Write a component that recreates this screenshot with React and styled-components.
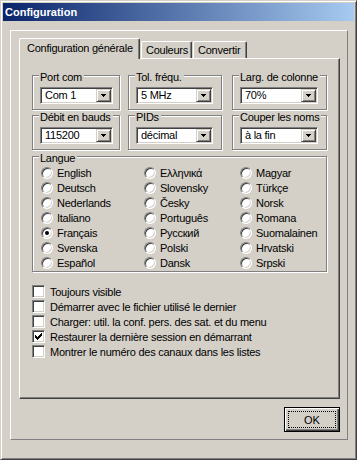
import React from 'react';
import styled, { createGlobalStyle } from 'styled-components';

const Global = createGlobalStyle`
  html, body { margin: 0; padding: 0; background: #D4D0C8; }
  * { box-sizing: border-box; }
`;

const Window = styled.div`
  width: 357px;
  height: 460px;
  background: #D4D0C8;
  border: 1px solid;
  border-color: #D4D0C8 #404040 #404040 #D4D0C8;
  box-shadow: inset 1px 1px 0 #fff, inset -1px -1px 0 #808080;
  padding: 2px;
  display: flex;
  flex-direction: column;
  font-family: "Liberation Sans", Arial, sans-serif;
  font-size: 11px;
  letter-spacing: -0.25px;
  color: #000;
`;

const TitleBar = styled.div`
  flex: none;
  height: 18px;
  background: linear-gradient(to right, #0A246A, #A6CAF0);
  color: #fff;
  font-weight: bold;
  font-size: 11px;
  letter-spacing: 0;
  display: flex;
  align-items: center;
  padding-left: 2px;
`;

const Body = styled.div`
  padding: 9px 6px 0 7px;
`;

const Frame = styled.div`
  width: 338px;
  height: 410px;
  border: 1px solid;
  border-color: #fff #808080 #808080 #fff;
  padding: 7px 7px 0 8px;
  display: flex;
  flex-direction: column;
`;

const TabStrip = styled.div`
  height: 20px;
  display: flex;
  align-items: flex-end;
  gap: 1px;
`;

const Tab = styled.div`
  position: relative;
  z-index: ${p => (p.$active ? 2 : 1)};
  width: ${p => p.$w}px;
  height: ${p => (p.$active ? 21 : 17)}px;
  margin-bottom: ${p => (p.$active ? -1 : 0)}px;
  background: #D4D0C8;
  border-left: 1px solid #fff;
  border-top: 1px solid #fff;
  border-right: 1px solid #404040;
  box-shadow: inset -1px 0 0 #808080;
  border-radius: 2px 2px 0 0;
  padding-left: ${p => p.$pl}px;
  padding-bottom: ${p => (p.$active ? 2 : 0)}px;
  display: flex;
  align-items: center;
  white-space: nowrap;
`;

const Panel = styled.div`
  width: 321px;
  height: 341px;
  border: 1px solid;
  border-color: #fff #404040 #404040 #fff;
  box-shadow: inset -1px -1px 0 #808080;
  padding: 16px 0 0 12px;
  display: flex;
  flex-direction: column;
`;

const GroupRow = styled.div`
  display: grid;
  grid-template-columns: 96px 104px 96px;
  margin-top: ${p => p.$mt || 0}px;
`;

const Group = styled.div`
  position: relative;
  width: ${p => p.$w - 1}px;
  height: ${p => p.$h - 1}px;
  border: 1px solid #808080;
  box-shadow: inset 1px 1px 0 #fff, 1px 1px 0 #fff;
  padding: ${p => p.$pad || '11px 0 0 7px'};
  margin-top: ${p => p.$mt || 0}px;
`;

const Legend = styled.span`
  position: absolute;
  top: -5px;
  left: 6px;
  line-height: 13px;
  padding: 0 2px 0 1px;
  background: #D4D0C8;
  white-space: nowrap;
`;

const Combo = styled.div`
  width: ${p => p.$w}px;
  height: 17px;
  background: #fff;
  border: 1px solid;
  border-color: #808080 #fff #fff #808080;
  box-shadow: inset 1px 1px 0 #404040, inset -1px -1px 0 #D4D0C8;
  padding: 1px;
  display: flex;
  align-items: center;
`;

const ComboText = styled.span`
  flex: 1;
  padding-left: 3px;
  line-height: 13px;
  white-space: nowrap;
`;

const DropBtn = styled.div`
  flex: none;
  width: 15px;
  height: 13px;
  background: #D4D0C8;
  border: 1px solid;
  border-color: #D4D0C8 #404040 #404040 #D4D0C8;
  box-shadow: inset 1px 1px 0 #fff, inset -1px -1px 0 #808080;
  display: flex;
  align-items: center;
  justify-content: center;
`;

const RadioGrid = styled.div`
  display: grid;
  grid-template-columns: 103px 96px 1fr;
  grid-template-rows: repeat(7, 15px);
  grid-auto-flow: column;
`;

const Choice = styled.label`
  display: flex;
  align-items: center;
  gap: ${p => p.$gap}px;
  height: ${p => p.$h}px;
  white-space: nowrap;
`;

const RadioDot = styled.span`
  position: relative;
  flex: none;
  width: 12px;
  height: 12px;
  border-radius: 50%;
  background: #fff;
  border: 1px solid;
  border-color: #808080 #fff #fff #808080;
  box-shadow: inset 1px 1px 0 #404040, inset -1px -1px 0 #D4D0C8;
  &::after {
    content: '';
    display: ${p => (p.$on ? 'block' : 'none')};
    position: absolute;
    left: 3px;
    top: 3px;
    width: 4px;
    height: 4px;
    border-radius: 50%;
    background: #000;
  }
`;

const CheckList = styled.div`
  margin-top: 12px;
  display: flex;
  flex-direction: column;
`;

const CheckBox = styled.span`
  flex: none;
  width: 13px;
  height: 13px;
  background: #fff;
  border: 1px solid;
  border-color: #808080 #fff #fff #808080;
  box-shadow: inset 1px 1px 0 #404040, inset -1px -1px 0 #D4D0C8;
  padding: 2px;
  display: flex;
`;

const ButtonRow = styled.div`
  margin-top: 8px;
  display: flex;
  justify-content: flex-end;
`;

const Button = styled.button`
  position: relative;
  width: 56px;
  height: 25px;
  padding: 0;
  border: 1px solid #000;
  background: #D4D0C8;
  box-shadow: inset 1px 1px 0 #fff, inset -1px -1px 0 #404040, inset -2px -2px 0 #808080;
  font-family: "Liberation Sans", Arial, sans-serif;
  font-size: 11px;
  color: #000;
  display: flex;
  align-items: center;
  justify-content: center;
  &::after {
    content: '';
    position: absolute;
    inset: 3px;
    border: 1px dotted #000;
  }
`;

const Arrow = () => (
  <svg width="5" height="3" viewBox="0 0 5 3" shapeRendering="crispEdges">
    <rect x="0" y="0" width="5" height="1" fill="#000" />
    <rect x="1" y="1" width="3" height="1" fill="#000" />
    <rect x="2" y="2" width="1" height="1" fill="#000" />
  </svg>
);

const Check = () => (
  <svg width="7" height="7" viewBox="0 0 7 7" shapeRendering="crispEdges">
    {[2, 3, 4, 3, 2, 1, 0].map((y, x) => (
      <rect key={x} x={x} y={y} width="1" height="3" fill="#000" />
    ))}
  </svg>
);

const ComboBox = ({ w, value }) => (
  <Combo $w={w}>
    <ComboText>{value}</ComboText>
    <DropBtn>
      <Arrow />
    </DropBtn>
  </Combo>
);

const languages = [
  'English', 'Deutsch', 'Nederlands', 'Italiano', 'Français', 'Svenska', 'Español',
  'Ελληνικά', 'Slovensky', 'Česky', 'Português', 'Русский', 'Polski', 'Dansk',
  'Magyar', 'Türkçe', 'Norsk', 'Romana', 'Suomalainen', 'Hrvatski', 'Srpski',
];

const options = [
  ['Toujours visible', false],
  ['Démarrer avec le fichier utilisé le dernier', false],
  ['Charger: util. la conf. pers. des sat. et du menu', false],
  ['Restaurer la dernière session en démarrant', true],
  ['Montrer le numéro des canaux dans les listes', false],
];

export default function App() {
  return (
    <>
      <Global />
      <Window>
        <TitleBar>Configuration</TitleBar>
        <Body>
          <Frame>
            <TabStrip>
              <Tab $active $w={121} $pl={7}>Configuration générale</Tab>
              <Tab $w={51} $pl={4}>Couleurs</Tab>
              <Tab $w={54} $pl={4}>Convertir</Tab>
            </TabStrip>
            <Panel>
              <GroupRow>
                <Group $w={89} $h={36}>
                  <Legend>Port com</Legend>
                  <ComboBox w={73} value="Com 1" />
                </Group>
                <Group $w={95} $h={36}>
                  <Legend>Tol. fréqu.</Legend>
                  <ComboBox w={77} value="5 MHz" />
                </Group>
                <Group $w={96} $h={36}>
                  <Legend>Larg. de colonne</Legend>
                  <ComboBox w={78} value="70%" />
                </Group>
              </GroupRow>
              <GroupRow $mt={5}>
                <Group $w={89} $h={36}>
                  <Legend>Débit en bauds</Legend>
                  <ComboBox w={73} value="115200" />
                </Group>
                <Group $w={95} $h={36}>
                  <Legend>PIDs</Legend>
                  <ComboBox w={77} value="décimal" />
                </Group>
                <Group $w={96} $h={36}>
                  <Legend>Couper les noms</Legend>
                  <ComboBox w={78} value="à la fin" />
                </Group>
              </GroupRow>
              <Group $w={296} $h={117} $mt={6} $pad="8px 0 0 8px">
                <Legend>Langue</Legend>
                <RadioGrid>
                  {languages.map(l => (
                    <Choice key={l} $gap={4} $h={15}>
                      <RadioDot $on={l === 'Français'} />
                      {l}
                    </Choice>
                  ))}
                </RadioGrid>
              </Group>
              <CheckList>
                {options.map(([t, on]) => (
                  <Choice key={t} $gap={5} $h={15}>
                    <CheckBox>{on && <Check />}</CheckBox>
                    {t}
                  </Choice>
                ))}
              </CheckList>
            </Panel>
            <ButtonRow>
              <Button>OK</Button>
            </ButtonRow>
          </Frame>
        </Body>
      </Window>
    </>
  );
}
